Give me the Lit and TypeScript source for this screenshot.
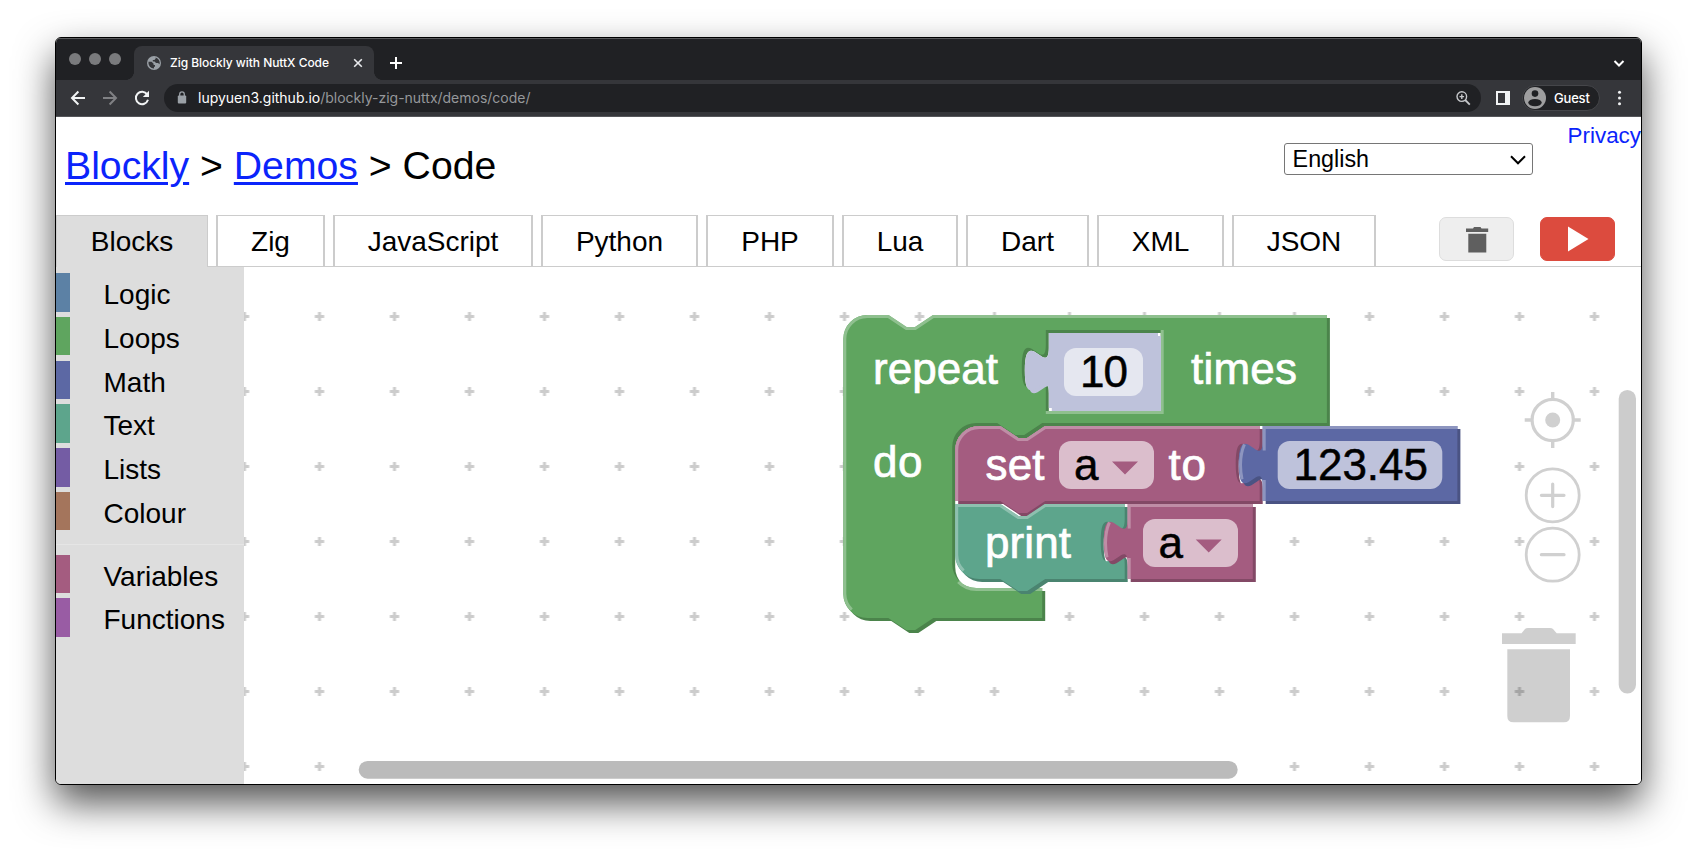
import { LitElement, html, svg, css } from "lit";
import { customElement } from "lit/decorators.js";

const TAB_DOWN = "c 0,10 -8,-8 -8,7.5 s 8,-2.5 8,7.5";
const TAB_UP = "c 0,-10 -8,8 -8,-7.5 s 8,2.5 8,-7.5";
const NOTCH_L = "l 6,4 3,0 6,-4";
const NOTCH_R = "l -6,4 -3,0 -6,-4";

interface Palette { main: string; light: string; dark: string; }
const GREEN: Palette = { main: "#5fa55f", light: "#8fc08f", dark: "#4b844b" };
const PINK: Palette = { main: "#a45c80", light: "#bf8da6", dark: "#834966" };
const BLUE: Palette = { main: "#5c68a4", light: "#8d95bf", dark: "#4a5383" };
const TEAL: Palette = { main: "#5da58c", light: "#8ec0af", dark: "#4a8470" };
const SHADOW: Palette = { main: "#bec2db", light: "none", dark: "#bec2db" };

function block(x: number, y: number, p: Palette, d: string, light: string) {
  return svg`<g transform="translate(${x} ${y})">
    <path d=${d} fill=${p.dark} fill-rule="evenodd" transform="translate(1 1)"></path>
    <path d=${d} fill=${p.main} fill-rule="evenodd"></path>
    <path d=${light} fill="none" stroke=${p.light} stroke-width="1"></path>
  </g>`;
}

const outputPath = (w: number, h: number) => `M0,0 H${w} V${h} H0 V20 ${TAB_UP} Z`;
const outputLight = (w: number, h: number) =>
  `M0.5,8.2 V0.5 H${w} M0.5,18 V${h} M-6.1,6.1 Q -8.2,11 -6.9,17.8`;

@customElement("blockly-workspace")
export class BlocklyWorkspace extends LitElement {
  static styles = css`
    :host { display: block; flex: 1; min-width: 0; }
    svg { display: block; width: 100%; height: 100%; font-family: "Liberation Sans", Arial, sans-serif; font-size: 44px; }
    .label { fill: #fff; stroke: #fff; stroke-width: 0.7px; }
    .value { fill: #000; stroke: #000; stroke-width: 0.5px; }
  `;

  render() {
    const xs = 37.3;
    return html`<svg viewBox="244 267 1397 517" preserveAspectRatio="xMinYMin slice">
      <defs>
        <pattern id="grid" patternUnits="userSpaceOnUse" x="206.5" y="279" width="75" height="75">
          <path d="M33.3,37.5 h9.4 M38,33 v9" stroke="#ccc" stroke-width="3"></path>
        </pattern>
      </defs>
      <rect x="244" y="267" width="1397" height="517" fill="#fff"></rect>
      <rect x="244" y="267" width="1397" height="517" fill="url(#grid)"></rect>

      <g transform="translate(843.3 315) scale(3)">
        ${block(0, 0, GREEN,
          `M0,8 A8,8 0 0 1 8,0 H15 ${NOTCH_L} H161.2 V36 H66.3 ${NOTCH_R} H44.3 a8,8 0 0 0 -8,8 V83 a8,8 0 0 0 8,8
           H66.3 V101 H30 ${NOTCH_R} H8 a8,8 0 0 1 -8,-8 Z
           M67.5,5 H105.8 V32 H67.5 V25 ${TAB_UP} Z`,
          `M2.8,98.2 A7.5,7.5 0 0 1 0.5,93 V8 A7.5,7.5 0 0 1 8,0.5 H15 ${NOTCH_L} H161.2
           M106.3,5 V32.5 H67.5 M38.3,89 A8.5,8.5 0 0 0 44.3,91.5 H66.3`)}
        ${block(68.5, 6, SHADOW, outputPath(36.4, 25), "")}
        ${block(xs, 37, PINK,
          `M0,8 A8,8 0 0 1 8,0 H15 ${NOTCH_L} H101.5 V5 ${TAB_DOWN} V25 H30 ${NOTCH_R} H0 Z`,
          `M0.5,25 V8 A7.5,7.5 0 0 1 8,0.5 H15 ${NOTCH_L} H101.5`)}
        ${block(139.8, 37, BLUE, outputPath(64.9, 25), outputLight(64.9, 25))}
        ${block(xs, 63, TEAL,
          `M0,0 H15 ${NOTCH_L} H56.5 V5 ${TAB_DOWN} V25 H30 ${NOTCH_R} H8 a8,8 0 0 1 -8,-8 Z`,
          `M2.8,22.2 A7.5,7.5 0 0 1 0.5,17 V0.5 H15 ${NOTCH_L} H56.5`)}
        ${block(94.8, 63, PINK, outputPath(41.7, 25), outputLight(41.7, 25))}
      </g>

      <rect x="1064" y="348" width="79" height="48" rx="12" fill="#e5e7f0"></rect>
      <rect x="1059" y="441" width="95" height="48" rx="12" fill="#dbbecc"></rect>
      <rect x="1277.7" y="441" width="164.6" height="48" rx="12" fill="#bec2db"></rect>
      <rect x="1143" y="519" width="95" height="48" rx="12" fill="#dbbecc"></rect>
      <path d="M1112,461.5 h26 l-13,13 z M1195.7,539.5 h26 l-13,13 z" fill="#a45c80"></path>

      <text class="label" x="873" y="384" textLength="125">repeat</text>
      <text class="label" x="1191" y="384" textLength="106">times</text>
      <text class="label" x="873" y="477.3" textLength="49.5">do</text>
      <text class="label" x="985.5" y="480.3" textLength="59">set</text>
      <text class="label" x="1168.5" y="480.3" textLength="37.5">to</text>
      <text class="label" x="985" y="557.5" textLength="86">print</text>
      <text class="value" x="1080" y="387" textLength="48">10</text>
      <text class="value" x="1074" y="480">a</text>
      <text class="value" x="1293.5" y="480" textLength="134.5">123.45</text>
      <text class="value" x="1158.5" y="558">a</text>

      <g fill="none" stroke="#d0d0d0" stroke-width="2.8">
        <circle cx="1552.7" cy="420" r="20.6" stroke-width="3.2"></circle>
        <path d="M1552.7,392 v7 M1552.7,441 v7 M1524.7,420 h7 M1573.7,420 h7" stroke-width="3.4"></path>
        <circle cx="1552.7" cy="495.3" r="26.5"></circle>
        <path d="M1541.4,495.3 h22.6 M1552.7,484 v22.6" stroke-width="3.2" stroke-linecap="round"></path>
        <circle cx="1552.7" cy="554.7" r="26.5"></circle>
        <path d="M1541.4,554.7 h22.6" stroke-width="3.2" stroke-linecap="round"></path>
      </g>
      <circle cx="1552.7" cy="420" r="7.5" fill="#d0d0d0"></circle>
      <path d="M1502,633.3 H1521.5 L1525,629 Q1526,628 1528,628 H1550 Q1552,628 1553,629 L1556.7,633.3 H1575.7 V644 H1502 Z
        M1507.3,649.3 H1570 V716 Q1570,722.3 1564,722.3 H1513.5 Q1507.3,722.3 1507.3,716 Z" fill="#000" fill-opacity="0.19"></path>

      <rect x="1618.7" y="390" width="17.3" height="303.5" rx="8.65" fill="#ccc"></rect>
      <rect x="358.7" y="761" width="879" height="17.7" rx="8.85" fill="#bbb"></rect>
    </svg>`;
  }
}

@customElement("browser-chrome")
export class BrowserChrome extends LitElement {
  static styles = css`
    :host { display: block; font-family: Inter, Roboto, sans-serif; color: #fff; }
    svg { display: block; flex: none; }
    .strip { display: flex; height: 42px; background: #202124; box-sizing: border-box; padding: 8px 16px 0 13px; box-shadow: inset 0 1px #5a5b5d; }
    .lights { display: flex; gap: 7.6px; padding: 7px 0 0 0; width: 65px; }
    .light { width: 12.4px; height: 12.4px; border-radius: 50%; background: #7a7b7d; }
    .tab { position: relative; display: flex; align-items: center; box-sizing: border-box; width: 240px; height: 34px; padding: 0 10px 1px 13px; background: #35363a; border-radius: 8px 8px 0 0; }
    .tab::before, .tab::after { content: ""; position: absolute; bottom: 0; width: 8px; height: 8px; }
    .tab::before { left: -8px; background: radial-gradient(circle at 0 0, #202124 7.6px, #35363a 8px); }
    .tab::after { right: -8px; background: radial-gradient(circle at 100% 0, #202124 7.6px, #35363a 8px); }
    .title { flex: 1; font-size: 12px; font-weight: 500; margin-left: 9px; letter-spacing: -0.04px; white-space: nowrap; }
    .plus { margin: 11px 0 0 16px; }
    .chev { margin: 12px 0 0 auto; }
    .bar { display: flex; align-items: center; height: 37px; background: #35363a; box-sizing: border-box; border-bottom: 1px solid #55565a; padding: 0 15px 1px 14px; }
    .nav { display: flex; gap: 16px; width: 94px; }
    .omni { display: flex; align-items: center; box-sizing: border-box; width: 1317px; height: 28px; border-radius: 14px; background: #202124; padding: 0 10px 0 13px; }
    .url { flex: 1; margin-left: 11px; font-size: 14px; color: #96989b; letter-spacing: -0.01px; white-space: nowrap; }
    .host { color: #fff; }
    .panel { margin-left: 15px; }
    .guest { display: flex; align-items: center; margin-left: 12px; width: 78px; height: 26px; box-sizing: border-box; border: 1px solid #45464a; border-radius: 13px; background: #202124; font-size: 13px; font-weight: 500; }
    .name { margin-left: 7px; letter-spacing: -0.2px; }
    .dots { margin-left: 16.5px; }
  `;

  render() {
    return html`
      <div class="strip">
        <div class="lights"><i class="light"></i><i class="light"></i><i class="light"></i></div>
        <div class="tab">
          <svg width="14" height="14" viewBox="0 0 14 14"><circle cx="7" cy="7" r="7" fill="#9aa0a6"></circle>
            <path d="M1.5,5.8 H4.6 L6.6,7.8 V9 H8 V10.4 L7,11 V12.6 A5.7,5.7 0 0 1 1.5,5.8 Z M8.6,1.5 V2.8 L7.4,4 H5.8 V5.6 H7.6 L9,7 H11 L12.6,8.2 A5.7,5.7 0 0 0 8.6,1.5 Z" fill="#35363a"></path></svg>
          <span class="title">Zig Blockly with NuttX Code</span>
          <svg width="12" height="12" viewBox="0 0 12 12"><path d="M2.2,2.2 L9.8,9.8 M9.8,2.2 L2.2,9.8" stroke="#e8eaed" stroke-width="1.6"></path></svg>
        </div>
        <svg class="plus" width="12" height="12" viewBox="0 0 12 12"><path d="M6,0 V12 M0,6 H12" stroke="#fff" stroke-width="2"></path></svg>
        <svg class="chev" width="12" height="12" viewBox="0 0 12 12"><path d="M1.5,3 L6,7.5 L10.5,3" fill="none" stroke="#fff" stroke-width="2"></path></svg>
      </div>
      <div class="bar">
        <div class="nav">
          <svg width="16" height="16" viewBox="0 0 16 16"><path d="M15,8 H2.2 M8.4,1.5 L2,8 L8.4,14.5" fill="none" stroke="#f1f3f4" stroke-width="2"></path></svg>
          <svg width="16" height="16" viewBox="0 0 16 16"><path d="M1,8 H13.8 M7.6,1.5 L14,8 L7.6,14.5" fill="none" stroke="#808184" stroke-width="2"></path></svg>
          <svg width="16" height="16" viewBox="0 0 16 16"><path d="M13.2,4.4 A6.2,6.2 0 1 0 14,9.8" fill="none" stroke="#f1f3f4" stroke-width="2"></path><path d="M15,0.8 V7 H8.8 Z" fill="#f1f3f4"></path></svg>
        </div>
        <div class="omni">
          <svg width="10" height="14" viewBox="0 0 10 14"><rect x="0.8" y="4.6" width="8.4" height="7.8" rx="1" fill="#9aa0a6"></rect><path d="M2.7,5 V3.2 A2.3,2.3 0 0 1 7.3,3.2 V5" fill="none" stroke="#9aa0a6" stroke-width="1.3"></path></svg>
          <span class="url"><span class="host">lupyuen3.github.io</span>/blockly-zig-nuttx/demos/code/</span>
          <svg width="16" height="16" viewBox="0 0 16 16"><g fill="none" stroke="#c5c7ca" stroke-width="1.4"><circle cx="6.8" cy="6.6" r="4.8"></circle><path d="M10.2,10 L14.8,14.6" stroke-width="1.8"></path><path d="M6.8,4.3 v4.6 M4.5,6.6 h4.6"></path></g></svg>
        </div>
        <svg class="panel" width="14" height="14" viewBox="0 0 14 14"><path d="M0,0 H14 V14 H0 Z M2,2 V12 H9 V2 Z" fill="#f1f3f4" fill-rule="evenodd"></path></svg>
        <div class="guest">
          <svg width="24" height="24" viewBox="0 0 24 24"><circle cx="12" cy="12" r="11" fill="#9e9e9f"></circle><circle cx="12" cy="7.6" r="3.3" fill="#202124"></circle><ellipse cx="12" cy="16.6" rx="6.7" ry="3.6" fill="#202124"></ellipse></svg>
          <span class="name">Guest</span>
        </div>
        <svg class="dots" width="5" height="16" viewBox="0 0 5 16"><g fill="#f1f3f4"><circle cx="2.5" cy="2.3" r="1.5"></circle><circle cx="2.5" cy="8" r="1.5"></circle><circle cx="2.5" cy="13.7" r="1.5"></circle></g></svg>
      </div>`;
  }
}

const TABS = ["Blocks", "Zig", "JavaScript", "Python", "PHP", "Lua", "Dart", "XML", "JSON"];
const CATEGORIES: [string, string][] = [
  ["Logic", "#5c81a5"], ["Loops", "#5fa55f"], ["Math", "#5c68a4"], ["Text", "#5da58c"],
  ["Lists", "#745ca4"], ["Colour", "#a4755c"], ["Variables", "#a45c80"], ["Functions", "#995ca4"],
];

@customElement("app-root")
export class AppRoot extends LitElement {
  static styles = css`
    :host { display: block; box-sizing: border-box; width: 1697px; height: 858px; padding: 37px 55px 0; background: #fff; overflow: hidden; font-family: "Liberation Sans", Arial, sans-serif; color: #000; }
    .window { display: flex; flex-direction: column; box-sizing: border-box; width: 1587px; height: 748px; border: 1px solid #000; border-radius: 6px; background: #fff; box-shadow: 0 18px 38px rgba(0, 0, 0, 0.68); }
    .page { display: flex; flex-direction: column; flex: 1; min-height: 0; border-radius: 0 0 5px 5px; overflow: hidden; }
    browser-chrome { border-radius: 5px 5px 0 0; overflow: hidden; }
    .head { display: flex; height: 98px; align-items: flex-start; }
    h1 { flex: 1; margin: 0; padding-left: 9px; font-size: 39.2px; font-weight: 400; line-height: 97px; white-space: nowrap; }
    a { color: #0b24fb; }
    h1 a { text-decoration-thickness: 3px; text-underline-offset: 3px; }
    .select { display: flex; align-items: center; justify-content: space-between; box-sizing: border-box; width: 249px; height: 32px; margin: 26px 35px 0 0; padding: 1px 6px 0 8px; border: 1px solid #767676; border-radius: 3px; font-size: 23.3px; }
    .privacy { margin-top: 6px; font-size: 22.4px; line-height: 26px; text-decoration: none; letter-spacing: 0; }
    .tabs { display: grid; grid-template-columns: 160px 117px 208px 165px 136px 124px 131px 135px 207px 101px 75px; height: 52px; box-sizing: border-box; border-bottom: 1px solid #ccc; flex: none; }
    .tab { box-sizing: border-box; margin-right: 8px; border: solid #ccc; border-width: 1px 2px 0; font-size: 28px; line-height: 51px; text-align: center; white-space: nowrap; }
    .tab:nth-child(9) { margin-right: 63px; }
    .tab.on { background: #ddd; border-width: 1px 1px 0; height: 52px; }
    .btn { display: flex; align-items: center; justify-content: center; box-sizing: border-box; width: 75px; height: 44px; margin-top: 2px; border: 1px solid #ddd; border-radius: 7px; background: #eee; }
    .btn.run { background: #dc4b3e; border-color: #dc4b3e; }
    .main { display: flex; flex: 1; min-height: 0; }
    .toolbox { width: 188px; flex: none; box-sizing: border-box; padding-top: 6px; background: #ddd; }
    .cat { height: 38.5px; margin-bottom: 5.25px; border-left: 14px solid; padding-left: 33.5px; font-size: 28px; line-height: 44px; white-space: nowrap; }
    .sep { height: 1px; margin: 14px 0 9.3px; background: #e5e5e5; }
  `;

  render() {
    return html`<div class="window">
      <browser-chrome></browser-chrome>
      <div class="page">
        <div class="head">
          <h1><a href="#">Blockly</a> &gt; <a href="#">Demos</a> &gt; Code</h1>
          <div class="select"><span>English</span>
            <svg width="16" height="10" viewBox="0 0 16 10"><path d="M1,1.3 L8,8.3 L15,1.3" fill="none" stroke="#000" stroke-width="2"></path></svg>
          </div>
          <a class="privacy" href="#">Privacy</a>
        </div>
        <div class="tabs">
          ${TABS.map((t, i) => html`<div class="tab ${i === 0 ? "on" : ""}">${t}</div>`)}
          <div class="btn"><svg width="24" height="28" viewBox="0 0 24 28"><path d="M1,3.4 H8 L9,2 H15.5 L16.5,3.4 H23.2 V7 H1 Z M3.3,8.8 H21.3 V27.5 H3.3 Z" fill="#5f5f5f"></path></svg></div>
          <div class="btn run"><svg width="22" height="26" viewBox="0 0 22 26"><path d="M1,0.5 L21.5,13 L1,25.5 Z" fill="#fff"></path></svg></div>
        </div>
        <div class="main">
          <div class="toolbox">
            ${CATEGORIES.map(([name, color], i) => html`
              ${i === 6 ? html`<div class="sep"></div>` : ""}
              <div class="cat" style="border-color:${color}">${name}</div>`)}
          </div>
          <blockly-workspace></blockly-workspace>
        </div>
      </div>
    </div>`;
  }
}
